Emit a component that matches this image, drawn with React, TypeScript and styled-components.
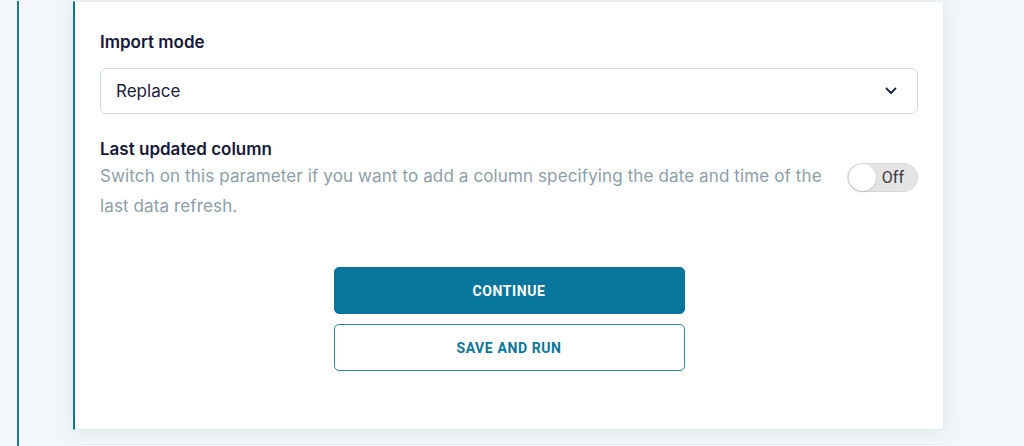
import React from "react";
import styled, { createGlobalStyle } from "styled-components";

const Global = createGlobalStyle`
  html, body {
    margin: 0;
    padding: 0;
    background: #f3f7f9;
    font-family: Inter, "Noto Sans", sans-serif;
    overflow: hidden;
  }
`;

const Page = styled.div`
  display: flex;
  height: 446px;
  padding-top: 1px;
  box-sizing: border-box;
`;

const Rail = styled.div`
  width: 54px;
  margin-left: 17px;
  border-left: 2px solid #1a7aa0;
  flex-shrink: 0;
`;

const Stack = styled.div`
  width: 871px;
  display: flex;
  flex-direction: column;
  gap: 14px;
`;

const Card = styled.section<{ $active?: boolean }>`
  background: #ffffff;
  border: 1px solid #e4ebef;
  border-left: 2px solid ${(p) => (p.$active ? "#0b759b" : "#e4ebef")};
  border-radius: 0 4px 4px 0;
  box-shadow: 0 2px 22px rgba(30, 100, 130, 0.1);
  padding: 28px 25px 58px 25px;
  flex-shrink: 0;
`;

const Label = styled.div`
  font-size: 17px;
  line-height: 24px;
  font-weight: 600;
  color: #16183a;
`;

const Select = styled.div`
  margin-top: 14px;
  height: 46px;
  box-sizing: border-box;
  border: 1px solid #d3dbe0;
  border-radius: 6px;
  display: flex;
  align-items: center;
  justify-content: space-between;
  padding: 0 20px 0 15px;
  font-size: 17px;
  color: #1d2040;
`;

const Row = styled.div`
  margin-top: 23px;
  display: flex;
  align-items: flex-start;
  gap: 24px;
`;

const Text = styled.div`
  flex: 1;
`;

const Hint = styled.div`
  font-size: 17px;
  line-height: 30px;
  letter-spacing: 0.12px;
  color: #8c9ea8;
`;

const Toggle = styled.div`
  margin-top: 26px;
  width: 71px;
  height: 29px;
  box-sizing: border-box;
  border-radius: 15px;
  background: #e4e4e4;
  border: 1px solid #d8d8d8;
  display: flex;
  align-items: center;
  padding: 0 13px 0 1px;
  justify-content: space-between;
  flex-shrink: 0;
`;

const Knob = styled.span`
  width: 27px;
  height: 27px;
  border-radius: 50%;
  background: #ffffff;
  box-shadow: 0 1px 2px rgba(0, 0, 0, 0.15);
`;

const ToggleText = styled.span`
  font-family: Roboto, "Liberation Sans", sans-serif;
  font-size: 16px;
  color: #3a3a3a;
`;

const Actions = styled.div`
  margin-top: 46px;
  display: flex;
  flex-direction: column;
  align-items: center;
  gap: 10px;
`;

const Button = styled.button<{ $primary?: boolean }>`
  width: 351px;
  height: 47px;
  border-radius: 5px;
  border: 1px solid ${(p) => (p.$primary ? "#08759c" : "#2a88ad")};
  background: ${(p) => (p.$primary ? "#08759c" : "#ffffff")};
  color: ${(p) => (p.$primary ? "#ffffff" : "#0b759b")};
  font-family: Roboto, "Liberation Sans", sans-serif;
  font-weight: 700;
  font-size: 14px;
  letter-spacing: 0.6px;
  cursor: pointer;
`;

const NextCard = styled.section`
  background: #ffffff;
  border: 1px solid #e4ebef;
  border-radius: 4px;
  height: 60px;
  flex-shrink: 0;
`;

export default function App() {
  return (
    <>
      <Global />
      <Page>
        <Rail />
        <Stack>
          <Card $active>
            <Label>Import mode</Label>
            <Select>
              <span>Replace</span>
              <svg width="12" height="8" viewBox="0 0 12 8" fill="none">
                <path d="M1.5 1.5L6 6L10.5 1.5" stroke="#1d2040" strokeWidth="1.8" strokeLinecap="round" strokeLinejoin="round" />
              </svg>
            </Select>
            <Row>
              <Text>
                <Label>Last updated column</Label>
                <Hint>
                  Switch on this parameter if you want to add a column specifying the date and time of the last data refresh.
                </Hint>
              </Text>
              <Toggle>
                <Knob />
                <ToggleText>Off</ToggleText>
              </Toggle>
            </Row>
            <Actions>
              <Button $primary>CONTINUE</Button>
              <Button>SAVE AND RUN</Button>
            </Actions>
          </Card>
          <NextCard />
        </Stack>
      </Page>
    </>
  );
}
